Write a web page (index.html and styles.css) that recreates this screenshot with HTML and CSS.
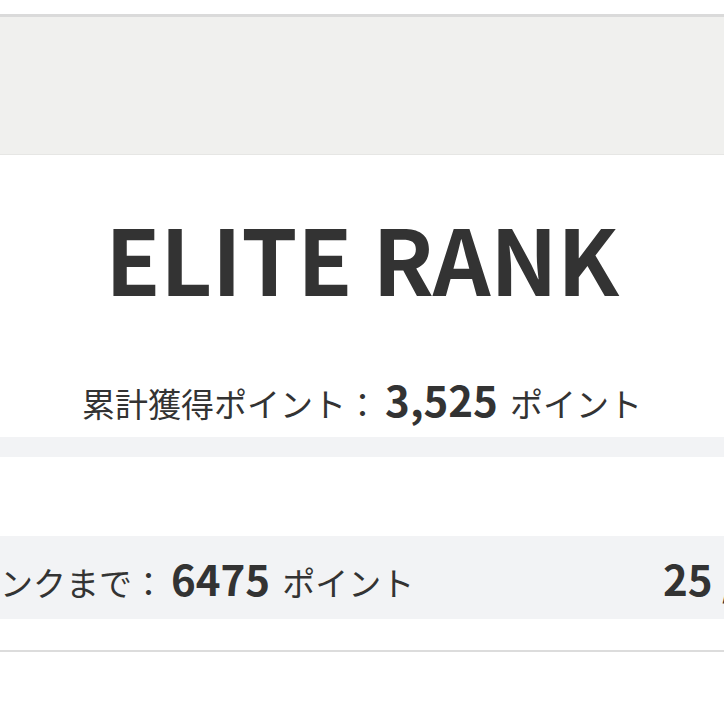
FILE: index.html
```html
<!DOCTYPE html>
<html lang="ja">
<head>
<meta charset="utf-8">
<link rel="stylesheet" href="styles.css">
</head>
<body>
<div class="page">
  <div class="top-space"></div>
  <header class="banner"></header>
  <section class="rank">
    <h1 class="rank-title">ELITE RANK</h1>
    <p class="total"><span class="label">累計獲得ポイント：</span><strong class="num">3,525</strong><span class="unit">ポイント</span></p>
  </section>
  <div class="divider-band"></div>
  <div class="spacer"></div>
  <div class="next-row">
    <p class="next"><span class="label next-label">次のランクまで：</span><strong class="num">6475</strong><span class="unit">ポイント</span></p>
    <p class="progress"><strong class="num">25 / 100</strong></p>
  </div>
  <div class="spacer2"></div>
  <div class="bottom-line"></div>
</div>
</body>
</html>
```

FILE: styles.css
```css
* { box-sizing: border-box; margin: 0; padding: 0; }
html, body { background: #fff; }
body {
  font-family: "Noto Sans CJK JP", "Noto Sans", sans-serif;
  color: #333;
  overflow: hidden;
}
.page { width: 724px; height: 724px; overflow: hidden; }
.top-space { height: 14px; }
.banner {
  height: 141px;
  background: #f0f0ee;
  border-top: 3px solid #dadada;
  border-bottom: 1px solid #e6e6e4;
}
.rank {
  height: 282px;
  display: flex;
  flex-direction: column;
  align-items: center;
}
.rank-title {
  font-size: 90px;
  font-weight: 700;
  line-height: 1;
  margin-top: 57px;
  letter-spacing: -0.3px;
  color: #333;
}
.total {
  margin-top: 76px;
  display: flex;
  align-items: baseline;
  font-size: 33px;
  line-height: 1;
}
.label { color: #333; }
.num {
  font-size: 42px;
  font-weight: 700;
  margin: 0 12px 0 6px;
}
.unit { color: #333; }
.divider-band { height: 20px; background: #f2f3f5; }
.spacer { height: 79px; }
.next-row {
  height: 83px;
  background: #f2f3f5;
  display: flex;
  align-items: center;
  overflow: hidden;
  white-space: nowrap;
}
.next {
  display: flex;
  align-items: baseline;
  font-size: 33px;
  line-height: 1;
  margin-left: -99px;
  flex-shrink: 0;
}
.progress {
  margin-left: auto;
  width: 61px;
  flex-shrink: 0;
  overflow: visible;
  line-height: 1;
}
.progress .num { margin: 0; }
.spacer2 { height: 31px; }
.bottom-line { height: 2px; background: #dcdcdc; }
```
